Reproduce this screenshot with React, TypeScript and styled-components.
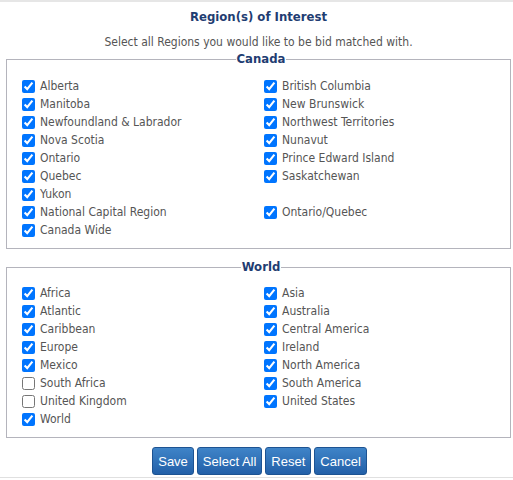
import React from "react";
import styled, { createGlobalStyle } from "styled-components";

const GlobalStyle = createGlobalStyle`
  html, body {
    margin: 0;
    padding: 0;
    background: #fff;
  }
  body {
    font-family: "DejaVu Sans Condensed", "Liberation Sans", sans-serif;
  }
`;

type Region = { name: string; checked: boolean } | null;

const canada: Region[] = [
  { name: "Alberta", checked: true },
  { name: "British Columbia", checked: true },
  { name: "Manitoba", checked: true },
  { name: "New Brunswick", checked: true },
  { name: "Newfoundland & Labrador", checked: true },
  { name: "Northwest Territories", checked: true },
  { name: "Nova Scotia", checked: true },
  { name: "Nunavut", checked: true },
  { name: "Ontario", checked: true },
  { name: "Prince Edward Island", checked: true },
  { name: "Quebec", checked: true },
  { name: "Saskatchewan", checked: true },
  { name: "Yukon", checked: true },
  null,
  { name: "National Capital Region", checked: true },
  { name: "Ontario/Quebec", checked: true },
  { name: "Canada Wide", checked: true },
];

const world: Region[] = [
  { name: "Africa", checked: true },
  { name: "Asia", checked: true },
  { name: "Atlantic", checked: true },
  { name: "Australia", checked: true },
  { name: "Caribbean", checked: true },
  { name: "Central America", checked: true },
  { name: "Europe", checked: true },
  { name: "Ireland", checked: true },
  { name: "Mexico", checked: true },
  { name: "North America", checked: true },
  { name: "South Africa", checked: false },
  { name: "South America", checked: true },
  { name: "United Kingdom", checked: false },
  { name: "United States", checked: true },
  { name: "World", checked: true },
];

const Page = styled.div`
  border-top: 2px solid #e6e6e6;
  border-bottom: 1px solid #e0e0e0;
  padding: 0 2px 2px 6px;
  width: 513px;
  box-sizing: border-box;
`;

const Title = styled.h3`
  margin: 0;
  padding-top: 6px;
  text-align: center;
  font-size: 13px;
  font-weight: bold;
  line-height: 18px;
  color: #1f3d72;
`;

const Subtitle = styled.p`
  margin: 7px 0 0;
  text-align: center;
  font-size: 12px;
  line-height: 18px;
  color: #555;
`;

const Group = styled.fieldset<{ $top: number; $bottom: number }>`
  margin: ${(p) => p.$top}px 0 0;
  padding: 0 10px ${(p) => p.$bottom}px 15px;
  border: 1px solid #b4b4bc;
  min-width: 0;
`;

const Legend = styled.legend`
  margin: 0 auto;
  padding: 0 1px;
  font-size: 13px;
  font-weight: bold;
  line-height: 16px;
  color: #1f3d72;
`;

const Grid = styled.div<{ $lead: number }>`
  display: grid;
  grid-template-columns: 242px 1fr;
  grid-auto-rows: 18px;
  padding-top: ${(p) => p.$lead}px;
`;

const Item = styled.label`
  display: flex;
  align-items: center;
  gap: 5px;
  font-size: 12px;
  color: #555;
  white-space: nowrap;
`;

const Box = styled.input`
  margin: 0;
  width: 13px;
  height: 13px;
`;

const Actions = styled.div`
  display: flex;
  justify-content: center;
  gap: 3px;
  margin-top: 9px;
  padding-left: 2px;
`;

const Button = styled.button`
  height: 28px;
  padding: 0 5px;
  font-family: "Liberation Sans", Arial, sans-serif;
  font-size: 13px;
  color: #fff;
  border: 1px solid #1d5392;
  border-radius: 3px;
  background: linear-gradient(#3f84c8, #2360a8);
  cursor: pointer;
`;

const RegionGroup: React.FC<{
  title: string;
  items: Region[];
  top: number;
  lead: number;
  bottom: number;
}> = ({ title, items, top, lead, bottom }) => (
  <Group $top={top} $bottom={bottom}>
    <Legend>{title}</Legend>
    <Grid $lead={lead}>
      {items.map((r, i) =>
        r ? (
          <Item key={r.name}>
            <Box type="checkbox" defaultChecked={r.checked} />
            {r.name}
          </Item>
        ) : (
          <span key={"empty" + i} />
        )
      )}
    </Grid>
  </Group>
);

const App: React.FC = () => (
  <>
    <GlobalStyle />
    <Page>
      <Title>Region(s) of Interest</Title>
      <Subtitle>Select all Regions you would like to be bid matched with.</Subtitle>
      <RegionGroup title="Canada" items={canada} top={0} lead={10} bottom={9} />
      <RegionGroup title="World" items={world} top={10} lead={9} bottom={9} />
      <Actions>
        <Button>Save</Button>
        <Button>Select All</Button>
        <Button>Reset</Button>
        <Button>Cancel</Button>
      </Actions>
    </Page>
  </>
);

export default App;
